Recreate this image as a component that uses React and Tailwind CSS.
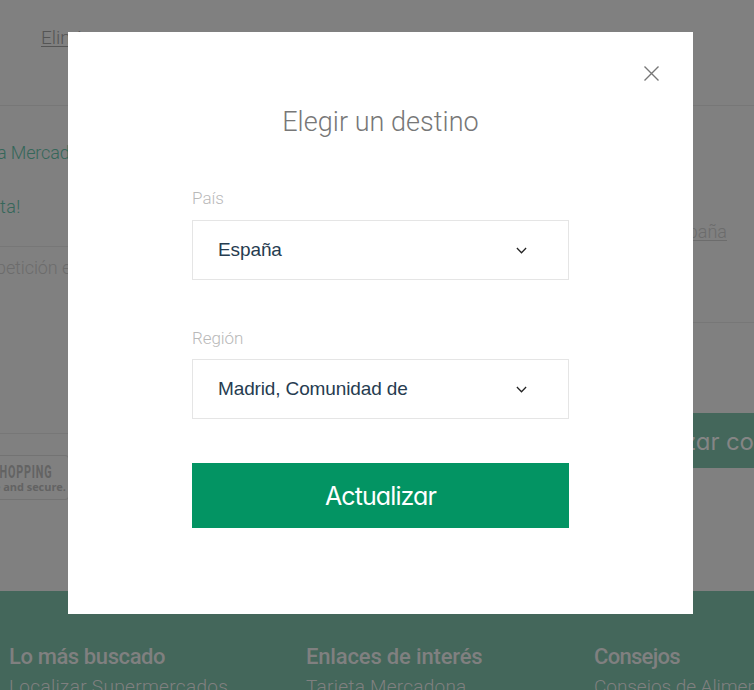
import React from "react";

const din = "font-['Roboto',sans-serif]";

function Select({ label, value, className = "", labelClass = "", valueClass = "" }) {
  return (
    <div className={className}>
      <label className={`${din} block h-[22px] text-[17px] font-light text-[#b9b9b9] ${labelClass}`}>{label}</label>
      <button className="mt-[10px] flex h-[60px] w-full items-center justify-between border border-[#e5e5e5] bg-white pl-[25px] pr-[41px] font-['Liberation_Sans',sans-serif] text-[19px] text-[#263c50]">
        <span className={`whitespace-nowrap ${valueClass}`}>{value}</span>
        <svg width="11" height="7" viewBox="0 0 11 7" fill="none" stroke="#222" strokeWidth="1.25">
          <path d="M.9 1 5.5 5.8 10.1 1" />
        </svg>
      </button>
    </div>
  );
}

function FooterColumn({ title, link, className, titleClass, linkClass }) {
  return (
    <div className={`shrink-0 whitespace-nowrap ${className}`}>
      <h3 className={`h-[30px] text-[22px] font-medium leading-[32px] ${titleClass}`}>{title}</h3>
      <a className={`mt-px block h-[30px] text-[19px] font-light leading-[30px] ${linkClass}`}>{link}</a>
    </div>
  );
}

export default function App() {
  return (
    <div className={`${din} relative h-[690px] w-[754px] overflow-hidden bg-[#808080]`}>
      <div className="flex h-[106px] items-start border-b border-[#777] pl-[41px] pt-[26px]">
        <a className="h-6 text-[19px] font-light leading-6 text-[#555] underline underline-offset-2">Eliminar</a>
      </div>

      <div className="flex h-[485px] justify-between">
        <div className="w-[120px] whitespace-nowrap text-[18px] font-light">
          <div className="h-[141px] border-b border-[#777] pt-[35px] text-[#35675a]">
            <p className="-ml-[3px] h-6 leading-6 tracking-[-.15px]">a Mercadona</p>
            <p className="mt-[30px] h-6 leading-6 tracking-[.4px]">ta!</p>
          </div>
          <div className="h-[187px] border-b border-[#777] pt-[9px] text-[#6c6c6c]">
            <p className="-ml-[4px] h-6 leading-6 tracking-[-.1px]">petición en</p>
          </div>
          <div className="mt-[21px] h-[45px] w-[69px] rounded-r border-y border-r border-[#737373] pt-[6px] text-[#636363]">
            <p className="-ml-[8px] h-5 text-[18px] font-bold leading-5">
              <span className="inline-block origin-left scale-x-[.6] tracking-[1.4px]">SHOPPING</span>
            </p>
            <p className="-ml-[6px] h-3 font-['Open_Sans',sans-serif] text-[11px] font-bold leading-[10px] tracking-[-.05px]">e and secure.</p>
          </div>
        </div>

        <div className="w-[81px] text-[#6c6c6c]">
          <div className="flex h-[217px] justify-end border-b border-[#777] pr-[27px] pt-[114px]">
            <a className="h-6 text-[18px] font-light leading-6 underline underline-offset-2">España</a>
          </div>
          <div className="mt-[90px] flex h-[55px] items-center bg-[#44675b] pl-[10px] pt-[3px]">
            <span className="whitespace-nowrap font-['Inter',sans-serif] text-[24px] tracking-[-.1px] text-[#858585] [font-feature-settings:'cv11']">zar compra</span>
          </div>
        </div>
      </div>

      <footer className="flex h-[99px] overflow-hidden bg-[#44675b] pl-[9px] pt-[50px] text-[#808080]">
        <FooterColumn className="w-[297px]" title="Lo más buscado" link="Localizar Supermercados" titleClass="tracking-[-.4px]" linkClass="tracking-[.32px]" />
        <FooterColumn className="w-[288px]" title="Enlaces de interés" link="Tarjeta Mercadona" titleClass="tracking-[-.17px]" linkClass="tracking-[.25px]" />
        <FooterColumn className="w-[200px]" title="Consejos" link="Consejos de Alimentación" titleClass="tracking-[-.7px]" linkClass="tracking-[-.05px]" />
      </footer>

      <div role="dialog" className="absolute left-[68px] top-8 h-[582px] w-[625px] bg-white px-[124px]">
        <button aria-label="Cerrar" className="absolute right-[34px] top-[34px]">
          <svg className="block" width="15" height="15" viewBox="0 0 15 15" fill="none" stroke="#777" strokeWidth="1.4">
            <path d="M.5.5l14 14M14.5.5l-14 14" />
          </svg>
        </button>
        <h2 className="mt-[74px] h-8 whitespace-nowrap text-center text-[27px] font-light leading-8 tracking-[.05px] text-[#777]">Elegir un destino</h2>
        <Select className="mt-[50px]" label="País" value="España" labelClass="leading-[20px]" valueClass="tracking-[-.1px]" />
        <Select className="mt-[47px]" label="Región" value="Madrid, Comunidad de" labelClass="leading-[22px] tracking-[-.1px]" valueClass="tracking-[-.13px]" />
        <button className="mt-11 block h-[65px] w-full bg-[#039463] pt-px font-['Inter',sans-serif] text-[25px] leading-[64px] tracking-[-.9px] text-white [font-feature-settings:'cv11']">Actualizar</button>
      </div>
    </div>
  );
}
